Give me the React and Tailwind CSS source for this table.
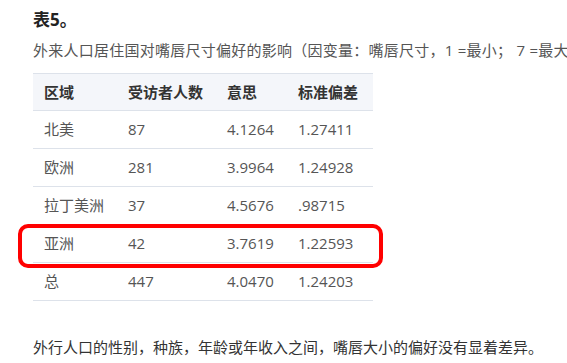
import React from "react";

const rows = [
  ["北美", "87", "4.1264", "1.27411"],
  ["欧洲", "281", "3.9964", "1.24928"],
  ["拉丁美洲", "37", "4.5676", ".98715"],
  ["亚洲", "42", "3.7619", "1.22593"],
  ["总", "447", "4.0470", "1.24203"],
];

const font = { fontFamily: '"Open Sans", "Noto Sans CJK SC", sans-serif' };

export default function App() {
  return (
    <div
      className="w-[567px] h-[363px] bg-white overflow-hidden pl-[33px] pt-[10px]"
      style={font}
    >
      <div className="text-[17px] font-bold leading-[20px] text-[#222]">表5。</div>
      <div className="mt-[10px] text-[15px] leading-[20px] text-[#555] whitespace-nowrap tracking-[0.25px]">
        外来人口居住国对嘴唇尺寸偏好的影响（因变量：嘴唇尺寸，1 =最小； 7 =最大）
      </div>
      <div className="relative mt-[13px] w-[340px]">
        <div className="grid grid-cols-[84px_99px_71px_86px] h-[38px] items-center bg-[#f4f6fa] border-t border-b border-[#dde2ea] text-[15px] font-bold text-[#333]">
          <div className="pl-[11px]">区域</div>
          <div className="pl-[11px]">受访者人数</div>
          <div className="pl-[11px]">意思</div>
          <div className="pl-[11px]">标准偏差</div>
        </div>
        {rows.map((r, i) => (
          <div
            key={i}
            className="grid grid-cols-[84px_99px_71px_86px] h-[38px] items-center border-b border-[#dde2ea] text-[15px] text-[#555]"
          >
            {r.map((c, j) => (
              <div key={j} className="pl-[11px]">
                {c}
              </div>
            ))}
          </div>
        ))}
        <div className="absolute left-[-15px] top-[151px] w-[365px] h-[44px] border-[4px] border-[#f00] rounded-[10px]"></div>
      </div>
      <div className="mt-[36px] text-[15px] leading-[20px] text-[#333] whitespace-nowrap">
        外行人口的性别，种族，年龄或年收入之间，嘴唇大小的偏好没有显着差异。
      </div>
    </div>
  );
}
